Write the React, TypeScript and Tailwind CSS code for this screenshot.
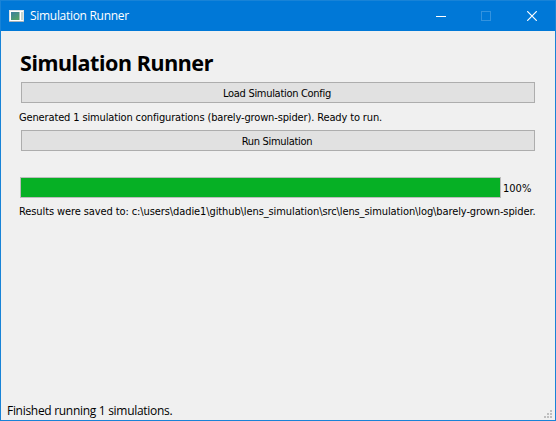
import type { ReactNode } from "react";

function PushButton({ children }: { children: ReactNode }) {
  return (
    <button className="ml-px flex h-[21px] w-[514px] shrink-0 items-center justify-center border border-[#adadad] bg-[#e1e1e1] pt-[2px] pr-[2px] text-[11px] leading-[13px] tracking-[-0.3px]">
      {children}
    </button>
  );
}

function AppIcon() {
  return (
    <svg width="16" height="14" viewBox="0 0 16 14" shapeRendering="crispEdges" className="mr-[5px] shrink-0">
      <defs>
        <linearGradient id="pane" x1="0" y1="0" x2="0.6" y2="1">
          <stop offset="0" stopColor="#3d7fa0" />
          <stop offset="1" stopColor="#51a06a" />
        </linearGradient>
      </defs>
      <rect x="0.5" y="1.5" width="14" height="11" fill="#fff" stroke="#dde2e5" />
      <rect x="0" y="12" width="15" height="1" fill="#a9b2b8" />
      <rect x="2" y="3" width="8" height="8" fill="url(#pane)" />
      <rect x="10" y="3" width="1" height="8" fill="#a9c4bd" />
      <rect x="12" y="3" width="2" height="8" fill="#c5d6cf" />
    </svg>
  );
}

function TitleBar() {
  return (
    <header className="flex h-[30px] shrink-0 items-center bg-[#0078d7] pl-2 text-white">
      <AppIcon />
      <span className="font-['Open_Sans','Noto_Sans',sans-serif] text-[12px] leading-[16px] tracking-[-0.3px] whitespace-nowrap">
        Simulation Runner
      </span>
      <div className="mr-[18px] ml-auto flex items-center">
        <svg width="10" height="10" viewBox="0 0 10 10" shapeRendering="crispEdges" className="mr-[35px]">
          <path d="M0 5.5H10" stroke="#fff" />
        </svg>
        <svg width="10" height="10" viewBox="0 0 10 10" shapeRendering="crispEdges" className="mr-[36px]">
          <rect x="0.5" y="0.5" width="9" height="9" fill="none" stroke="#3393df" />
        </svg>
        <svg width="10" height="10" viewBox="0 0 10 10">
          <path d="M0.2 0.2L9.8 9.8M9.8 0.2L0.2 9.8" stroke="#fff" strokeWidth="1.2" />
        </svg>
      </div>
    </header>
  );
}

function SizeGrip() {
  return (
    <svg width="8" height="8" viewBox="0 0 8 8" fill="#bfbfbf" shapeRendering="crispEdges" className="mr-[3px] mb-[2px] self-end">
      <path d="M6 0h2v2h-2zM3 3h2v2h-2zM6 3h2v2h-2zM0 6h2v2h-2zM3 6h2v2h-2zM6 6h2v2h-2z" />
    </svg>
  );
}

export default function App() {
  return (
    <div className="flex h-[421px] w-[556px] flex-col overflow-hidden border border-[#1883d7] bg-[#f0f0f0] font-['DejaVu_Sans_Condensed','DejaVu_Sans',sans-serif] text-black">
      <TitleBar />
      <main className="flex flex-1 flex-col pt-[18px] pl-[19px] whitespace-nowrap">
        <h1 className="mb-[5px] h-[28px] font-['Noto_Sans',sans-serif] text-[21.5px] leading-[28px] font-bold tracking-[-0.4px]">
          Simulation Runner
        </h1>
        <PushButton>Load Simulation Config</PushButton>
        <p className="mt-[8px] mb-[6px] -ml-px h-[13px] text-[11px] leading-[13px] tracking-[-0.14px]">
          Generated 1 simulation configurations (barely-grown-spider). Ready to run.
        </p>
        <PushButton>Run Simulation</PushButton>
        <div className="mt-[26px] flex h-[21px] items-center gap-[2px]">
          <div className="h-[21px] w-[481px] border border-[#bcbcbc] bg-[#06b025]" />
          <span className="pt-[2px] text-[11px] leading-[13px]">100%</span>
        </div>
        <p className="mt-[7px] -ml-px h-[13px] text-[11px] leading-[13px] tracking-[-0.1px]">
          Results were saved to: c:\users\dadie1\github\lens_simulation\src\lens_simulation\log\barely-grown-spider.
        </p>
      </main>
      <footer className="flex h-[20px] shrink-0 items-center justify-between pl-[6px] font-['Open_Sans','Noto_Sans',sans-serif] text-[12px] leading-[16px] tracking-[-0.3px]">
        <span className="pt-[2px]">Finished running 1 simulations.</span>
        <SizeGrip />
      </footer>
    </div>
  );
}
